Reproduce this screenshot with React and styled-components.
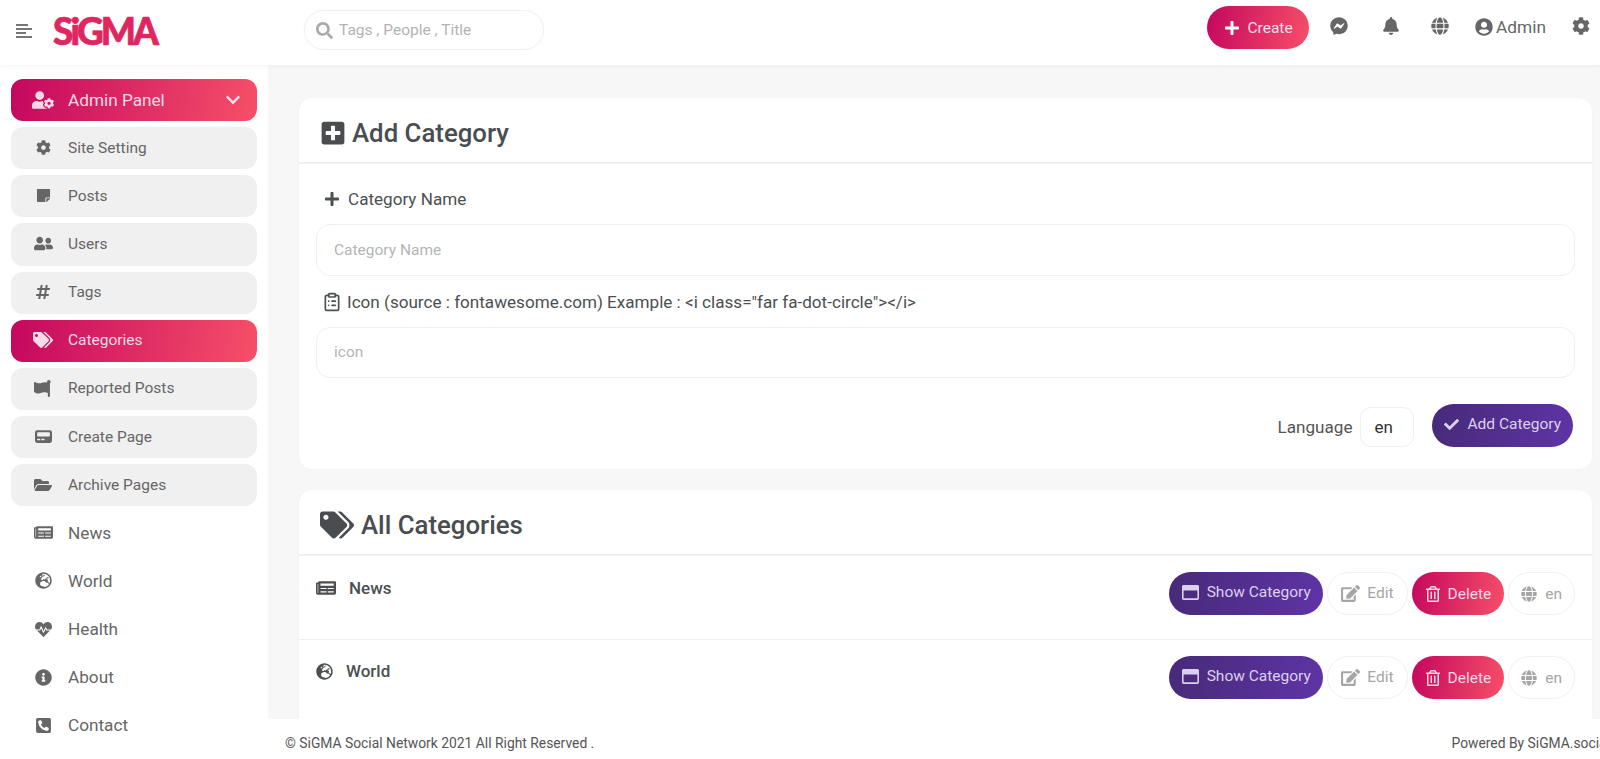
import React from "react";
import styled, { createGlobalStyle } from "styled-components";
import { ClipboardList } from "lucide-react";
import {
  FaSearch, FaPlus, FaFacebookMessenger, FaBell, FaGlobe, FaUserCircle, FaCog, FaUserCog, FaChevronDown,
  FaStickyNote, FaUserFriends, FaHashtag, FaTags, FaFlag, FaPager, FaFolderOpen, FaNewspaper, FaGlobeEurope,
  FaHeartbeat, FaInfoCircle, FaPhoneSquareAlt, FaPlusSquare, FaCheck, FaRegWindowMaximize,
  FaEdit, FaRegTrashAlt,
} from "react-icons/fa";

const PINK = "linear-gradient(100deg, #c4075f 0%, #f74f68 100%)";
const PURPLE = "linear-gradient(100deg, #472a78 0%, #5f34a6 100%)";

const Global = createGlobalStyle`
  html, body { margin: 0; height: 100%; overflow: hidden; background: #f7f7f7; }
  * { box-sizing: border-box; }
  body { font-family: Roboto, "Liberation Sans", sans-serif; color: #4c4f52; }
  #root { height: 759px; }
`;

const Page = styled.div`
  height: 759px;
  display: flex;
  flex-direction: column;
`;

const TopBar = styled.header`
  height: 65px;
  flex: none;
  background: #fff;
  display: flex;
  align-items: center;
  padding-bottom: 5px;
  position: relative;
  z-index: 2;
  box-shadow: 0 1px 6px rgba(0, 0, 0, 0.05);
`;

const Burger = styled.svg`
  width: 16px;
  height: 16px;
  margin-left: 16px;
  margin-top: 2px;
`;

const Logo = styled.div`
  margin-left: 21px;
  font-family: Lato, Inter, sans-serif;
  font-weight: 900;
  font-size: 37px;
  letter-spacing: -2.9px;
  -webkit-text-stroke: 0.7px #e0265f;
  line-height: 1;
  color: #e0265f;
  width: 251px;
  flex: none;
`;

const Search = styled.div`
  width: 240px;
  height: 40px;
  border: 1px solid #f0f0f0;
  border-radius: 20px;
  display: flex;
  align-items: center;
  gap: 6px;
  padding-left: 11px;
  color: #b3b3b3;
  font-size: 15.5px;
  box-shadow: 0 0 3px rgba(0, 0, 0, 0.03);
  svg { font-size: 17px; color: #aaa; }
`;

const TopRight = styled.div`
  margin-left: auto;
  margin-top: -5px;
  display: flex;
  align-items: center;
  color: #666;
`;

const CreateButton = styled.div`
  width: 102px;
  height: 43px;
  border-radius: 22px;
  background: ${PINK};
  color: #fde;
  display: flex;
  align-items: center;
  justify-content: center;
  gap: 8px;
  font-size: 15.5px;
  margin-right: 21px;
  svg { font-size: 16px; color: #fff; }
`;

const TopIcon = styled.span`
  display: flex;
  font-size: 18px;
  margin-right: ${(p) => p.$gap}px;
  margin-bottom: 4px;
  color: #666;
`;

const AdminName = styled.span`
  display: flex;
  align-items: center;
  gap: 3px;
  font-size: 17.3px;
  margin-right: 26px;
  margin-bottom: 2px;
  color: #666;
  svg { font-size: 18px; }
`;

const Body = styled.div`
  flex: 1;
  min-height: 0;
  display: flex;
`;

const Sidebar = styled.nav`
  width: 268px;
  flex: none;
  background: #fff;
  padding: 14px 11px 0;
  display: flex;
  flex-direction: column;
  gap: 6px;
`;

const NavItem = styled.div`
  height: 42.15px;
  flex: none;
  border-radius: 12px;
  display: flex;
  align-items: center;
  padding: 0 0 1px 21px;
  background: ${(p) => (p.$active ? PINK : p.$plain ? "transparent" : "#f0f0f0")};
  color: ${(p) => (p.$active ? "#fbd9e6" : "#666")};
  font-size: ${(p) => (p.$large ? 17.2 : 15.5)}px;
`;

const NavIcon = styled.span`
  width: 22px;
  display: flex;
  justify-content: center;
  margin-right: 14px;
  font-size: ${(p) => p.$size || 17}px;
  color: ${(p) => (p.$active ? "#fbd9e6" : "#666")};
  transform: ${(p) => (p.$flip ? "scaleX(-1)" : "none")};
`;

const Chevron = styled.span`
  margin-left: auto;
  margin-right: 16px;
  display: flex;
  font-size: 16px;
  color: #fde;
`;

const MainColumn = styled.div`
  flex: 1;
  min-width: 0;
  display: flex;
  flex-direction: column;
`;

const Main = styled.main`
  flex: 1;
  min-height: 0;
  overflow: hidden;
  padding: 33px 8px 0 31px;
  display: flex;
  flex-direction: column;
  gap: 21px;
`;

const Card = styled.section`
  flex: none;
  background: #fff;
  border-radius: 14px;
  box-shadow: 0 0 4px rgba(0, 0, 0, 0.02);
`;

const CardHeader = styled.div`
  height: 66px;
  border-bottom: 2px solid #eeeeee;
  display: flex;
  align-items: center;
  gap: ${(p) => p.$gap}px;
  padding: 5px 0 0 21px;
  h2 { margin: 0; font-size: 25.8px; font-weight: 500; color: #4a4d50; }
  svg { font-size: ${(p) => p.$icon}px; color: #4a4d50; }
`;

const Form = styled.div`
  padding: 23px 17px 22px;
`;

const Label = styled.div`
  display: flex;
  align-items: center;
  gap: ${(p) => p.$gap}px;
  padding-left: ${(p) => p.$indent}px;
  height: 24px;
  font-size: 17.1px;
  color: #4c4f52;
  margin-bottom: 13px;
  svg { font-size: ${(p) => p.$icon}px; }
`;

const Field = styled.input`
  display: block;
  width: 100%;
  height: 51.5px;
  border: 1px solid #f0f0f0;
  border-radius: 14px;
  padding: 0 17px;
  font-family: inherit;
  font-size: 15.5px;
  margin-bottom: 14px;
  outline: none;
  &::placeholder { color: #b5b5b5; opacity: 1; }
`;

const FormFooter = styled.div`
  display: flex;
  justify-content: flex-end;
  align-items: center;
  margin-top: 26px;
  padding-right: 2px;
`;

const LangLabel = styled.span`
  font-size: 17.1px;
  margin-right: 8px;
  margin-top: 2px;
  color: #555;
`;

const LangSelect = styled.div`
  width: 54px;
  height: 40px;
  border: 1px solid #f0f0f0;
  border-radius: 11px;
  display: flex;
  align-items: center;
  padding-left: 13px;
  font-size: 17px;
  color: #333;
  margin-right: 18px;
  margin-top: 3px;
`;

const Pill = styled.div`
  height: 43px;
  border-radius: 22px;
  display: flex;
  align-items: center;
  gap: ${(p) => p.$gap}px;
  padding: 0 ${(p) => p.$pad}px ${(p) => (p.$kind === "purple" ? 3 : p.$lift ? 1 : 0)}px;
  font-size: 15.5px;
  white-space: nowrap;
  background: ${(p) => (p.$kind === "purple" ? PURPLE : p.$kind === "pink" ? PINK : "#fff")};
  color: ${(p) => (p.$kind === "plain" ? "#a6a6a6" : p.$kind === "pink" ? "#fbd9e6" : "#dcd0f0")};
  border: ${(p) => (p.$kind === "plain" ? "1px solid #f0f0f0" : "none")};
  svg { font-size: ${(p) => p.$icon}px; flex: none; }
`;

const Row = styled.div`
  height: ${(p) => p.$height}px;
  padding: 16px 17px 0;
  display: flex;
  justify-content: space-between;
  align-items: flex-start;
  border-bottom: ${(p) => (p.$last ? "none" : "1px solid #f0f0f0")};
`;

const RowName = styled.div`
  display: flex;
  align-items: center;
  gap: 13px;
  font-size: 17px;
  font-weight: 500;
  color: #4c4f52;
  margin-top: ${(p) => p.$top}px;
  svg { font-size: ${(p) => p.$icon}px; }
`;

const RowActions = styled.div`
  display: flex;
  gap: 4px;
`;

const Footer = styled.footer`
  height: 40px;
  flex: none;
  background: #fff;
  display: flex;
  justify-content: space-between;
  align-items: center;
  padding: 8px 0 0 17px;
  font-size: 13.85px;
  color: #555;
  overflow: hidden;
  white-space: nowrap;
`;

const Powered = styled.span`
  margin-right: -10px;
`;

const navItems = [
  { label: "Site Setting", Icon: FaCog, size: 15 },
  { label: "Posts", Icon: FaStickyNote, size: 15 },
  { label: "Users", Icon: FaUserFriends, size: 19 },
  { label: "Tags", Icon: FaHashtag, size: 16 },
  { label: "Categories", Icon: FaTags, size: 20, active: true },
  { label: "Reported Posts", Icon: FaFlag, size: 17, flip: true },
  { label: "Create Page", Icon: FaPager, size: 17 },
  { label: "Archive Pages", Icon: FaFolderOpen, size: 18 },
  { label: "News", Icon: FaNewspaper, size: 19, plain: true },
  { label: "World", Icon: FaGlobeEurope, size: 17, plain: true },
  { label: "Health", Icon: FaHeartbeat, size: 17, plain: true },
  { label: "About", Icon: FaInfoCircle, size: 17, plain: true },
  { label: "Contact", Icon: FaPhoneSquareAlt, size: 17, plain: true },
];

function Actions() {
  return (
    <RowActions>
      <Pill $kind="purple" $pad={12.5} $gap={8} $icon={17}><FaRegWindowMaximize />Show Category</Pill>
      <Pill $kind="plain" $lift $icon={19} $pad={13} $gap={7}><FaEdit />Edit</Pill>
      <Pill $kind="pink" $icon={16} $pad={13} $gap={7}><FaRegTrashAlt />Delete</Pill>
      <Pill $kind="plain" $icon={16} $pad={12} $gap={8}><FaGlobe />en</Pill>
    </RowActions>
  );
}

export default function App() {
  return (
    <Page>
      <Global />
      <TopBar>
        <Burger viewBox="0 0 16 16" stroke="#555" strokeWidth="1.6">
          <line x1="0" y1="2" x2="12" y2="2" />
          <line x1="0" y1="6" x2="16" y2="6" />
          <line x1="0" y1="10" x2="10" y2="10" />
          <line x1="0" y1="14" x2="16" y2="14" />
        </Burger>
        <Logo>SiGMA</Logo>
        <Search><FaSearch />Tags , People , Title</Search>
        <TopRight>
          <CreateButton><FaPlus />Create</CreateButton>
          <TopIcon $gap={34}><FaFacebookMessenger /></TopIcon>
          <TopIcon $gap={31}><FaBell /></TopIcon>
          <TopIcon $gap={26}><FaGlobe /></TopIcon>
          <AdminName><FaUserCircle />Admin</AdminName>
          <TopIcon $gap={10}><FaCog /></TopIcon>
        </TopRight>
      </TopBar>
      <Body>
        <Sidebar>
          <NavItem $active $large>
            <NavIcon $active $size={22}><FaUserCog /></NavIcon>Admin Panel
            <Chevron><FaChevronDown /></Chevron>
          </NavItem>
          {navItems.map(({ label, Icon, size, active, plain, flip }) => (
            <NavItem key={label} $active={active} $plain={plain} $large={plain}>
              <NavIcon $active={active} $size={size} $flip={flip}><Icon /></NavIcon>
              {label}
            </NavItem>
          ))}
        </Sidebar>
        <MainColumn>
          <Main>
            <Card>
              <CardHeader $gap={6} $icon={26}><FaPlusSquare /><h2>Add Category</h2></CardHeader>
              <Form>
                <Label $gap={8} $icon={16} $indent={8}><FaPlus />Category Name</Label>
                <Field placeholder="Category Name" />
                <Label $gap={5} $icon={20} $indent={6}><ClipboardList size={20} />{'Icon (source : fontawesome.com) Example : <i class="far fa-dot-circle"></i>'}</Label>
                <Field placeholder="icon" />
                <FormFooter>
                  <LangLabel>Language</LangLabel>
                  <LangSelect>en</LangSelect>
                  <Pill $kind="purple" $icon={15} $pad={12} $gap={8}><FaCheck />Add Category</Pill>
                </FormFooter>
              </Form>
            </Card>
            <Card>
              <CardHeader $gap={7} $icon={34}><FaTags /><h2>All Categories</h2></CardHeader>
              <Row $height={84}>
                <RowName $icon={20} $top={6}><FaNewspaper />News</RowName>
                <Actions />
              </Row>
              <Row $height={90} $last>
                <RowName $icon={17} $top={5}><FaGlobeEurope />World</RowName>
                <Actions />
              </Row>
            </Card>
          </Main>
          <Footer>
            <span>© SiGMA Social Network 2021 All Right Reserved .</span>
            <Powered>Powered By SiGMA.social</Powered>
          </Footer>
        </MainColumn>
      </Body>
    </Page>
  );
}
